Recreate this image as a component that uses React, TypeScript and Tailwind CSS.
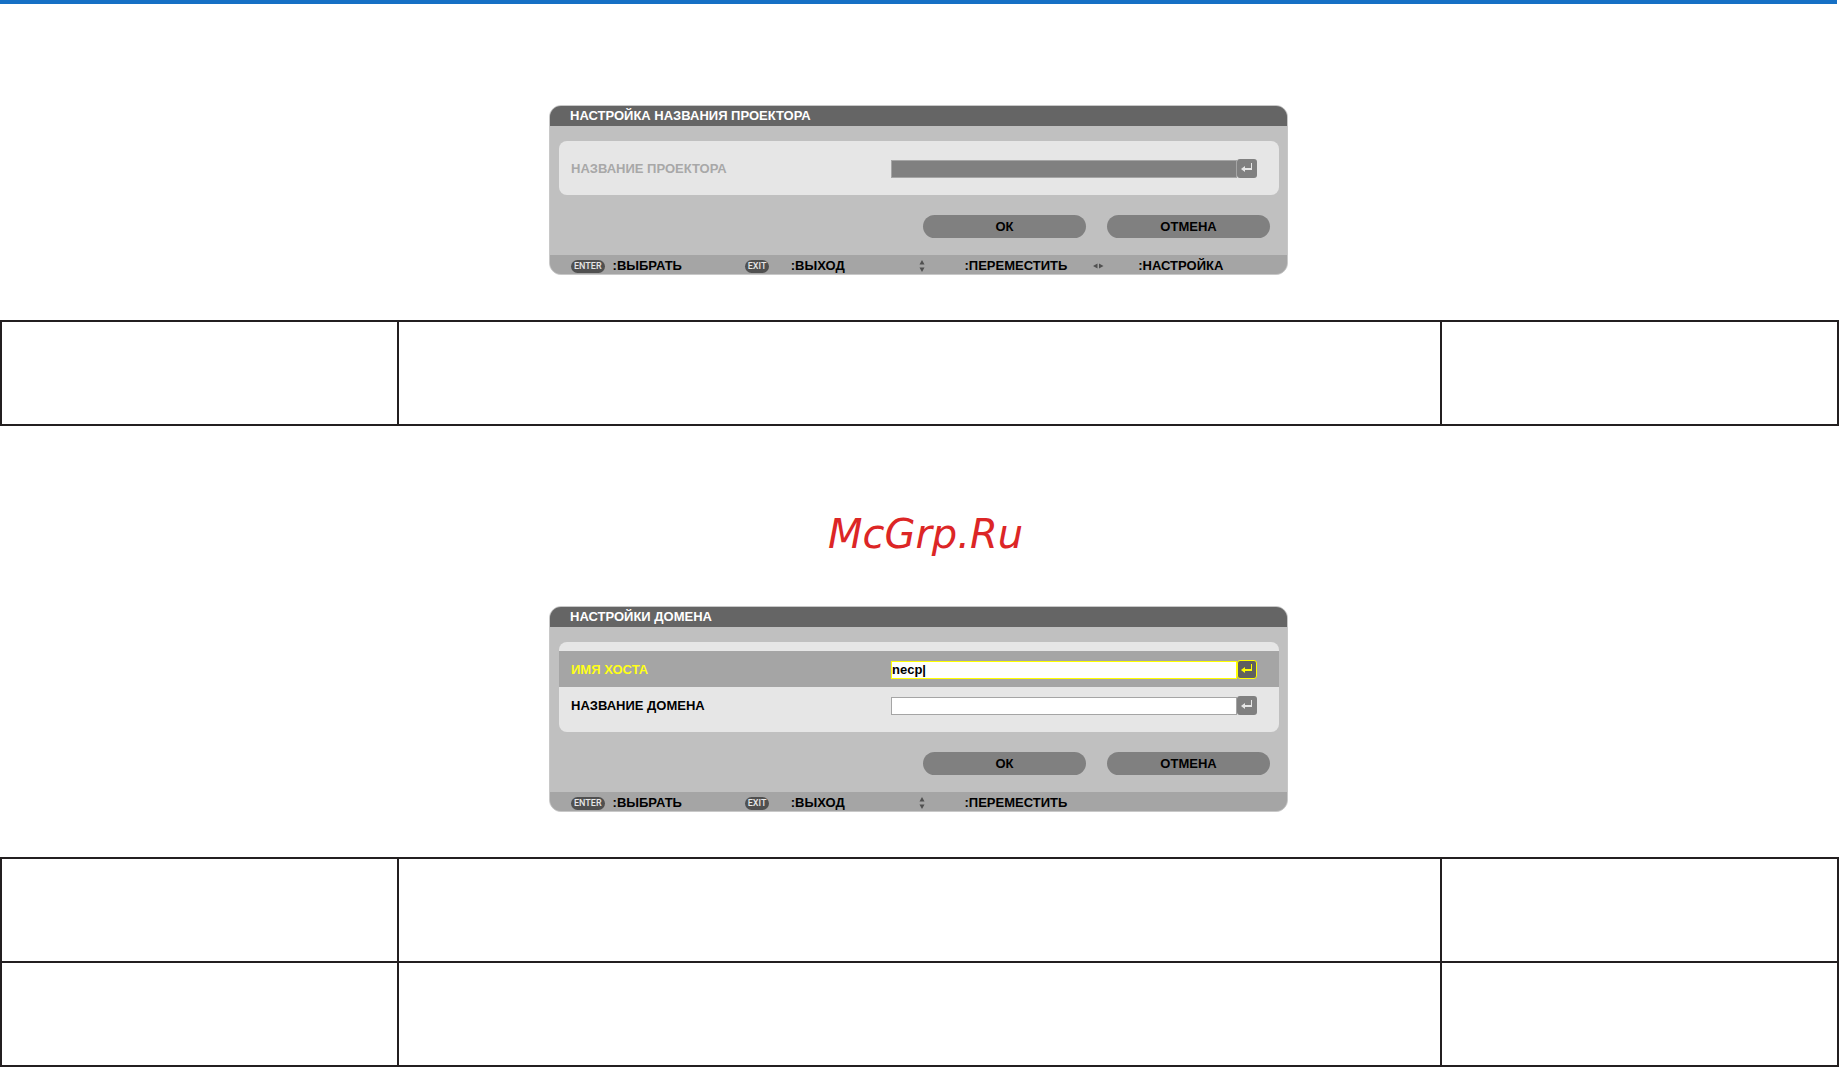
import { useState } from 'react';
import clsx from 'clsx';

type FieldState = 'normal' | 'active' | 'disabled';

interface FieldProps {
  id: string;
  label: string;
  initial?: string;
  state?: FieldState;
}

function ReturnIcon() {
  return (
    <svg viewBox="0 0 20 19" className="h-[19px] w-5 shrink-0" aria-hidden="true">
      <path d="M14 4h1v7H7V9h7z" fill="currentColor" />
      <path d="M4 10 8 7v6z" fill="currentColor" />
    </svg>
  );
}

function UpDownIcon() {
  return (
    <svg viewBox="0 0 6 12" className="h-3 w-1.5" aria-hidden="true">
      <path d="M3 0 5.5 4.5h-5zM3 12 .5 7.5h5z" fill="#505050" />
    </svg>
  );
}

function LeftRightIcon() {
  return (
    <svg viewBox="0 0 12 6" className="h-1.5 w-3" aria-hidden="true">
      <path d="M1 3 5.5.5v5zM11.5 3 7 .5v5z" fill="#505050" />
    </svg>
  );
}

function KeyCap({ children }: { children: string }) {
  return (
    <kbd className="flex h-[13px] items-center rounded-full bg-[#505050] px-[3px] font-['Roboto',sans-serif] text-[9px] leading-none font-medium text-[#e6e6e6]">
      {children}
    </kbd>
  );
}

function Field({ id, label, initial = '', state = 'normal' }: FieldProps) {
  const [value, setValue] = useState(initial);
  const active = state === 'active';
  const disabled = state === 'disabled';

  return (
    <div
      className={clsx(
        'flex h-9 items-center justify-between pr-[22px] pl-3',
        active && 'bg-[#a5a5a5]',
      )}
    >
      <label
        htmlFor={id}
        className={clsx(
          'pt-0.5',
          active && 'text-[#ffff18]',
          disabled && 'text-[#a8a8a8]',
        )}
      >
        {label}
      </label>
      <div className="flex w-[366px] items-end">
        <input
          id={id}
          type="text"
          value={value}
          disabled={disabled}
          onChange={(e) => setValue(e.target.value)}
          className={clsx(
            'h-[18px] min-w-0 flex-1 border outline-none',
            active && 'border-[#ffff00] bg-white',
            disabled && 'border-[#a5a5a5] bg-[#808080]',
            state === 'normal' && 'border-[#a5a5a5] bg-white',
          )}
        />
        <button
          type="button"
          aria-label={label}
          disabled={disabled}
          className={clsx(
            'flex h-[19px] w-5 items-center justify-center rounded-[3px]',
            active
              ? 'border border-[#ffff00] bg-[#606060] text-[#ffff00]'
              : 'bg-[#808080] text-[#e6e6e6]',
          )}
        >
          <ReturnIcon />
        </button>
      </div>
    </div>
  );
}

interface DialogProps {
  title: string;
  fields: FieldProps[];
  adjustable?: boolean;
}

function Dialog({ title, fields, adjustable }: DialogProps) {
  return (
    <section className="mx-auto w-full max-w-[739px] overflow-hidden rounded-xl border border-[#c8c8c8] bg-[#c0c0c0] font-['Liberation_Sans',Arial,sans-serif] text-[13px] leading-5 font-bold text-black">
      <h2 className="h-5 bg-[#656565] pl-5 text-white">{title}</h2>
      <div className="pt-[15px] pr-2 pb-[17px] pl-[9px]">
        <div className="rounded-lg bg-[#e6e6e6] py-[9px]">
          {fields.map((f) => (
            <Field key={f.id} {...f} />
          ))}
        </div>
        <div className="mt-5 flex justify-end gap-[21px] pr-[9px]">
          <button type="button" className="h-[23px] w-[163px] rounded-full bg-[#808080]">
            ОК
          </button>
          <button type="button" className="h-[23px] w-[163px] rounded-full bg-[#808080]">
            ОТМЕНА
          </button>
        </div>
      </div>
      <footer className="grid h-[19px] grid-cols-4 items-center bg-[#a5a5a5] px-[21px] pt-px">
        <div className="flex items-center gap-2">
          <KeyCap>ENTER</KeyCap>
          <span>:ВЫБРАТЬ</span>
        </div>
        <div className="flex items-center">
          <div className="flex w-[46px]">
            <KeyCap>EXIT</KeyCap>
          </div>
          <span>:ВЫХОД</span>
        </div>
        <div className="flex items-center">
          <div className="flex w-[46px]">
            <UpDownIcon />
          </div>
          <span>:ПЕРЕМЕСТИТЬ</span>
        </div>
        {adjustable && (
          <div className="flex items-center">
            <div className="flex w-[46px]">
              <LeftRightIcon />
            </div>
            <span>:НАСТРОЙКА</span>
          </div>
        )}
      </footer>
    </section>
  );
}

function EmptyTable({ rows }: { rows: number }) {
  return (
    <table className="mt-[45px] w-full table-fixed border-collapse">
      <colgroup>
        <col className="w-[21.6%]" />
        <col />
        <col className="w-[21.6%]" />
      </colgroup>
      <tbody>
        {Array.from({ length: rows }, (_, i) => (
          <tr key={i} className="h-[104px]">
            <td className="border-2 border-[#231f20]" />
            <td className="border-2 border-[#231f20]" />
            <td className="border-2 border-[#231f20]" />
          </tr>
        ))}
      </tbody>
    </table>
  );
}

function App() {
  return (
    <main className="bg-white">
      <div className="pr-0.5">
        <div className="mb-[101px] h-1 bg-[#1670c5]" />
        <Dialog
          title="НАСТРОЙКА НАЗВАНИЯ ПРОЕКТОРА"
          fields={[{ id: 'projector', label: 'НАЗВАНИЕ ПРОЕКТОРА', state: 'disabled' }]}
          adjustable
        />
      </div>
      <EmptyTable rows={1} />

      <div className="flex h-[180px] items-center justify-center pt-9 pl-3 font-['DejaVu_Sans',sans-serif] text-[40px] text-[#dc2626] italic">
        McGrp.Ru
      </div>

      <div className="pr-0.5">
        <Dialog
          title="НАСТРОЙКИ ДОМЕНА"
          fields={[
            { id: 'host', label: 'ИМЯ ХОСТА', initial: 'necp|', state: 'active' },
            { id: 'domain', label: 'НАЗВАНИЕ ДОМЕНА' },
          ]}
        />
      </div>
      <EmptyTable rows={2} />
    </main>
  );
}

export default App;
